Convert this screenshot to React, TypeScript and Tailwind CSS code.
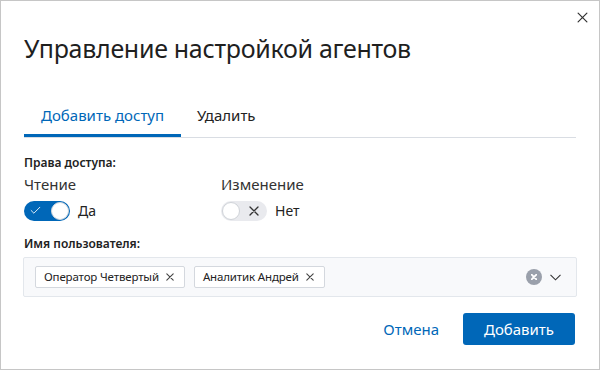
import { Check } from 'lucide-react'

const font = { fontFamily: '"Noto Sans", "Open Sans", sans-serif' }

// тонкий крестик без внутренних отступов
function Cross({ size, className, width = 1.3 }: { size: number; className?: string; width?: number }) {
  return (
    <svg width={size} height={size} viewBox="0 0 10 10" className={className} fill="none" stroke="currentColor">
      <path d="M1 1l8 8M9 1l-8 8" strokeWidth={width * (10 / size)} strokeLinecap="round" />
    </svg>
  )
}

function Toggle({ on }: { on: boolean }) {
  if (on) {
    return (
      <div className="flex h-[20px] w-[46px] items-center justify-between rounded-full bg-[#0067b8] pl-[5px] pr-[1px]">
        <Check className="h-[13px] w-[13px] text-white" strokeWidth={1.6} />
        <div className="h-[18px] w-[18px] rounded-full border border-[#cfd6dd] bg-white" />
      </div>
    )
  }
  return (
    <div className="flex h-[20px] w-[46px] items-center justify-between rounded-full bg-[#e9eaee] pl-[1px] pr-[8px]">
      <div className="h-[18px] w-[18px] rounded-full border border-[#cfd3d8] bg-white" />
      <Cross size={10} className="text-[#333]" width={1.3} />
    </div>
  )
}

function Chip({ label }: { label: string }) {
  return (
    <div className="flex h-[22px] items-center gap-[7px] rounded-[2px] border border-[#d4d8de] bg-white pl-[8px] pr-[10px] text-[11.5px] tracking-[-0.15px] text-[#222]">
      <span>{label}</span>
      <Cross size={8} className="text-[#444]" width={1.1} />
    </div>
  )
}

export default function App() {
  return (
    <div
      className="relative h-[370px] w-[600px] border border-[#c6c6c6] bg-white text-[#222]"
      style={font}
    >
      <button className="absolute right-[11px] top-[11px] text-[#333]" aria-label="Закрыть">
        <Cross size={11} width={1.2} />
      </button>

      <div className="px-[23px] pt-[29px]">
        <h1 className="text-[25px] leading-[36px] tracking-[-0.3px] text-[#1f1f1f]">Управление настройкой агентов</h1>

        <div className="mt-[38px] flex border-b border-[#d9dde3]">
          <div className="border-b-[3px] border-[#0067b8] px-[17px] pb-[8px] text-[15px] leading-[22px] text-[#0067b8]">
            Добавить доступ
          </div>
          <div className="px-[16px] pb-[8px] text-[15px] leading-[22px] text-[#222]">Удалить</div>
        </div>

        <div className="mt-[17px] text-[12px] font-semibold leading-[16px]">Права доступа:</div>
        <div className="mt-[3px] flex">
          <div className="w-[197px]">
            <div className="text-[15px] leading-[20px] text-[#333]">Чтение</div>
            <div className="mt-[6px] flex items-center gap-[8px]">
              <Toggle on />
              <span className="text-[14px]">Да</span>
            </div>
          </div>
          <div>
            <div className="text-[15px] leading-[20px] text-[#333]">Изменение</div>
            <div className="mt-[6px] flex items-center gap-[8px]">
              <Toggle on={false} />
              <span className="text-[14px]">Нет</span>
            </div>
          </div>
        </div>

        <div className="mt-[15px] text-[12px] font-semibold leading-[16px]">Имя пользователя:</div>
        <div className="ml-[-1px] mt-[5px] flex h-[40px] w-[554px] items-center gap-[9px] rounded-[2px] border border-[#e3e7ec] bg-[#f8f9fb] pl-[11px] pr-[15px]">
          <Chip label="Оператор Четвертый" />
          <Chip label="Аналитик Андрей" />
          <div className="ml-auto flex items-center gap-[8px]">
            <div className="flex h-[16px] w-[16px] items-center justify-center rounded-full bg-[#9aa0ab]">
              <Cross size={6} className="text-white" width={1.8} />
            </div>
            <svg width="11" height="7" viewBox="0 0 11 7" fill="none" stroke="#333" strokeWidth={1.1}>
              <path d="M0.5 0.8l5 5 5-5" />
            </svg>
          </div>
        </div>

        <div className="mt-[16px] flex items-center justify-end gap-[24px] pr-[1px]">
          <button className="text-[15px] text-[#0067b8]">Отмена</button>
          <button className="h-[32px] w-[112px] rounded-[3px] bg-[#0067b8] text-[15px] text-white">Добавить</button>
        </div>
      </div>
    </div>
  )
}
